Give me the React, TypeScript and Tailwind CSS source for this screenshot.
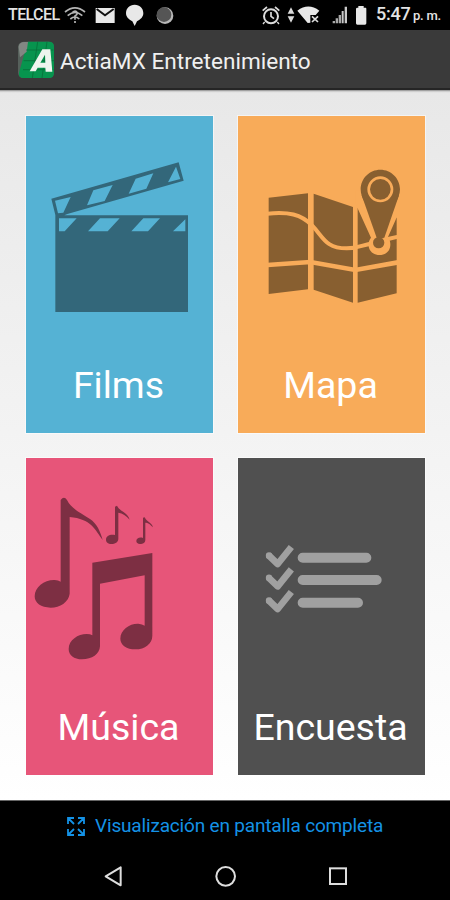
import type { ReactNode } from 'react';

function StatusBar() {
  return (
    <div className="flex h-[30px] items-center bg-black pl-[8px] text-[#e4e4e4]">
      <span className="w-[56px] whitespace-nowrap text-[16px] font-medium leading-[32px] tracking-[-0.6px]">
        TELCEL
      </span>
      <svg width="110" height="30" viewBox="192 0 330 90" fill="none">
        {/* wifi with question mark */}
        <g stroke="#b5b5b5" strokeWidth="5">
          <path d="M195 36Q225 11 255 36M203 47Q225 28 247 47M211 57Q225 45 238 57" />
          <path d="M217 38Q226 29 232 38Q232 44 225 48V59M225 63V69" />
        </g>
        <path d="M287 24H344V69H287Z" fill="#e8e8e8" />
        <path d="M290 27L315 46L341 27" stroke="#111" strokeWidth="6" />
        <path d="M404 14C388 14 378 25 378 39C378 51 386 58 397 64L404 78L411 64C422 58 430 51 430 39C430 25 420 14 404 14Z" fill="#e8e8e8" />
        <circle cx="495" cy="47" r="25" fill="#b8b8b8" />
        <circle cx="492" cy="44" r="22" fill="#555" />
      </svg>
      <svg className="ml-[87px]" width="108" height="30" viewBox="108 0 324 90" fill="none">
        <circle cx="138" cy="49" r="21" stroke="#dcdcdc" strokeWidth="6" />
        <path d="M138 36V49L147 56M113 32L126 21M163 32L150 21" stroke="#dcdcdc" strokeWidth="5" />
        <path d="M119 66L114 72M157 66L162 72" stroke="#dcdcdc" strokeWidth="4" />
        <path d="M198 22L208 41H188ZM198 68L208 49H188Z" fill="#dcdcdc" />
        <path d="M217 32Q250 7 283 32L272 45H256V68L248 69Z" fill="#e8e8e8" />
        <path d="M261 49L279 66M279 49L261 66" stroke="#dcdcdc" strokeWidth="5" />
        <g fill="#a9a9a9">
          <path d="M323 63H330V70H323ZM332 55H339V70H332ZM341 45H348V70H341Z" />
          <path d="M350 33H356V70H350ZM359 20H366V70H359Z" fill="#c9c9c9" />
        </g>
        <path d="M400 18H416V23H422Q424 23 424 27V70Q424 74 420 74H397Q393 74 393 70V27Q393 23 397 23H400Z" fill="#e8e8e8" />
      </svg>
      <span className="ml-[7px] whitespace-nowrap text-[18px] font-medium leading-[34px] tracking-[-0.2px]">
        5:47 <span className="ml-[-2px] text-[13px] tracking-[-0.2px]">p. m.</span>
      </span>
    </div>
  );
}

function AppLogo() {
  return (
    <svg width="38" height="38" viewBox="50 123 114 114" fill="none">
      <rect x="53" y="125" width="108" height="109" rx="16" fill="#56605b" />
      <path d="M82 125H146Q161 125 161 140V218Q161 234 146 234H69Q54 234 56 218Z" fill="#07944e" />
      <path d="M55 140Q57 126 72 126H83L79 155L59 172Z" fill="#828783" />
      <path d="M70 182H161M78 150H159M112 125L96 234M68 209H159M140 125L125 234" stroke="#08763e" strokeWidth="3" />
      <path
        fillRule="evenodd"
        d="M88 214L126 148H150L156 215H136L135 203H112L106 214ZM120 188H135L134 164Z"
        fill="#eef5ee"
      />
    </svg>
  );
}

function FilmIcon() {
  return (
    <svg width="188" height="220" viewBox="17 17 564 660">
      <path
        fillRule="evenodd"
        fill="#33677a"
        d="M93 265L475 156L490 211L141 311L132 315H503V605H105V314ZM104 271L113 309L129 307L151 260ZM219 240L277 224L253 272L200 285ZM346 205L399 189L378 235L325 250ZM467 169L480 206L443 216ZM116 324V363H133L169 324ZM239 324H298L262 363H203ZM369 324H419L383 363H333ZM495 327V363H458Z"
      />
    </svg>
  );
}

function MapIcon() {
  return (
    <svg width="188" height="220" viewBox="24 17 564 660" fill="none">
      <g fill="#885f30">
        <path d="M116 262L234 249V537L116 551ZM251 250L369 290V577L251 538ZM383 293L500 322V549L383 577Z" />
      </g>
      <g stroke="#f8ab59">
        <path d="M112 310C175 304 213 311 247 346C281 382 287 414 350 414C384 414 398 404 422 400" strokeWidth="12" />
        <path d="M474 386L505 379" strokeWidth="12" />
        <path d="M112 464L241 455L376 479L504 456" strokeWidth="14" />
      </g>
      <path d="M376 279L423 382C407 402 418 434 449 434C480 434 489 403 474 380L509 301V240H376Z" fill="#f8ab59" />
      <path d="M451 178C419 178 392 204 392 237C392 264 410 281 424 314L442 384H460L476 320C486 289 510 265 510 237C510 204 483 178 451 178Z" fill="#885f30" />
      <path d="M395 255L440 382H463L507 255Z" fill="#885f30" />
      <circle cx="451" cy="237" r="35" fill="#885f30" stroke="#f8ab59" strokeWidth="8" />
      <circle cx="446" cy="397" r="17" fill="#885f30" />
    </svg>
  );
}

function MusicIcon() {
  return (
    <svg width="188" height="220" viewBox="17 25 564 660" fill="#7d2f43">
      <path d="M121 151Q131 138 140 151C153 177 181 190 209 208C229 221 240 245 247 271C225 241 212 207 148 202V432C145 457 119 474 91 474C62 474 43 460 43 440C43 413 72 390 103 391Q114 392 121 396Z" />
      <path d="M216 339L396 310V558C396 582 374 599 345 599C319 599 300 586 300 567C300 540 328 521 354 522Q366 523 373 528V377L239 402V590C238 613 215 629 185 629C161 629 145 616 145 598C145 571 173 553 199 553Q210 553 216 557Z" />
      <path d="M284 171L290 168C299 186 322 188 328 210C317 197 307 191 294 189V267C294 277 284 283 273 283C263 283 257 277 257 270C257 258 270 253 284 256Z" />
      <path d="M368 204L373 203C380 219 394 217 398 233C388 222 382 219 375 219V270C375 279 368 283 359 283C352 283 348 279 348 274C348 266 358 261 368 265Z" />
    </svg>
  );
}

function SurveyIcon() {
  return (
    <svg width="188" height="220" viewBox="24 25 564 660" fill="none" stroke="#a0a0a0">
      <path
        d="M115 316L143 343L184 292M115 383L143 410L184 359M115 451L143 478L184 427"
        strokeWidth="20"
        strokeLinejoin="round"
      />
      <path d="M117 317V318M117 384V385M117 452V453" strokeWidth="19" strokeLinecap="round" />
      <path d="M218 324H409M218 391H440M218 459H384" strokeWidth="30" strokeLinecap="round" />
    </svg>
  );
}

type TileProps = { label: string; color: string; children: ReactNode };

function Tile({ label, color, children }: TileProps) {
  return (
    <button className={`flex h-[317px] flex-col items-center overflow-hidden ring-1 ring-white/50 ${color}`}>
      {children}
      <span className="mt-[25px] pr-[2px] text-[37.5px] leading-[48px] text-white">{label}</span>
    </button>
  );
}

export default function App() {
  return (
    <div className="flex h-[900px] w-[450px] flex-col overflow-hidden bg-black font-[Roboto,sans-serif]">
      <StatusBar />
      <header className="flex h-[60px] items-center border-b-2 border-[#252525] bg-[#3a3a3a] pl-[17px] pt-px">
        <AppLogo />
        <h1 className="ml-[5px] pt-[5px] text-[22.6px] leading-[30px] text-[#f0f0f0]">ActiaMX Entretenimiento</h1>
      </header>

      <main className="h-[710px] bg-linear-to-b from-[#e8e8e8] to-white pt-[26px] shadow-[inset_0_3px_2px_-2px_#888]">
        <div className="grid grid-cols-[187px_187px] gap-x-[25px] gap-y-[25px] pl-[26px]">
          <Tile label="Films" color="bg-[#55b2d4]"><FilmIcon /></Tile>
          <Tile label="Mapa" color="bg-[#f8ab59]"><MapIcon /></Tile>
          <Tile label="Música" color="bg-[#e75579]"><MusicIcon /></Tile>
          <Tile label="Encuesta" color="bg-[#505050]"><SurveyIcon /></Tile>
        </div>
      </main>

      <footer className="flex h-[100px] flex-col border-t border-[#666] bg-black">
        <div className="flex h-[50px] items-center pl-[67px] text-[#1492e6]">
          <svg width="18" height="19" viewBox="0 0 18 19" fill="none" stroke="currentColor" strokeWidth="1.8">
            <path d="M1 7V1H7M1 1L7 7M11 1H17V7M17 1L11 7M1 12V18H7M1 18L7 12M17 12V18H11M17 18L11 12" />
          </svg>
          <span className="ml-[10px] whitespace-nowrap pt-px text-[19px] tracking-[-0.17px]">
            Visualización en pantalla completa
          </span>
        </div>
        <nav className="flex h-[49px] items-center pl-[103px]">
          <svg width="246" height="22" viewBox="309 249 738 66" fill="none" stroke="#dedede" strokeWidth="6">
            <path d="M317 283L362 256V310Z" strokeLinejoin="round" />
            <circle cx="677" cy="283" r="28" />
            <rect x="990" y="259" width="48" height="47" />
          </svg>
        </nav>
      </footer>
    </div>
  );
}
